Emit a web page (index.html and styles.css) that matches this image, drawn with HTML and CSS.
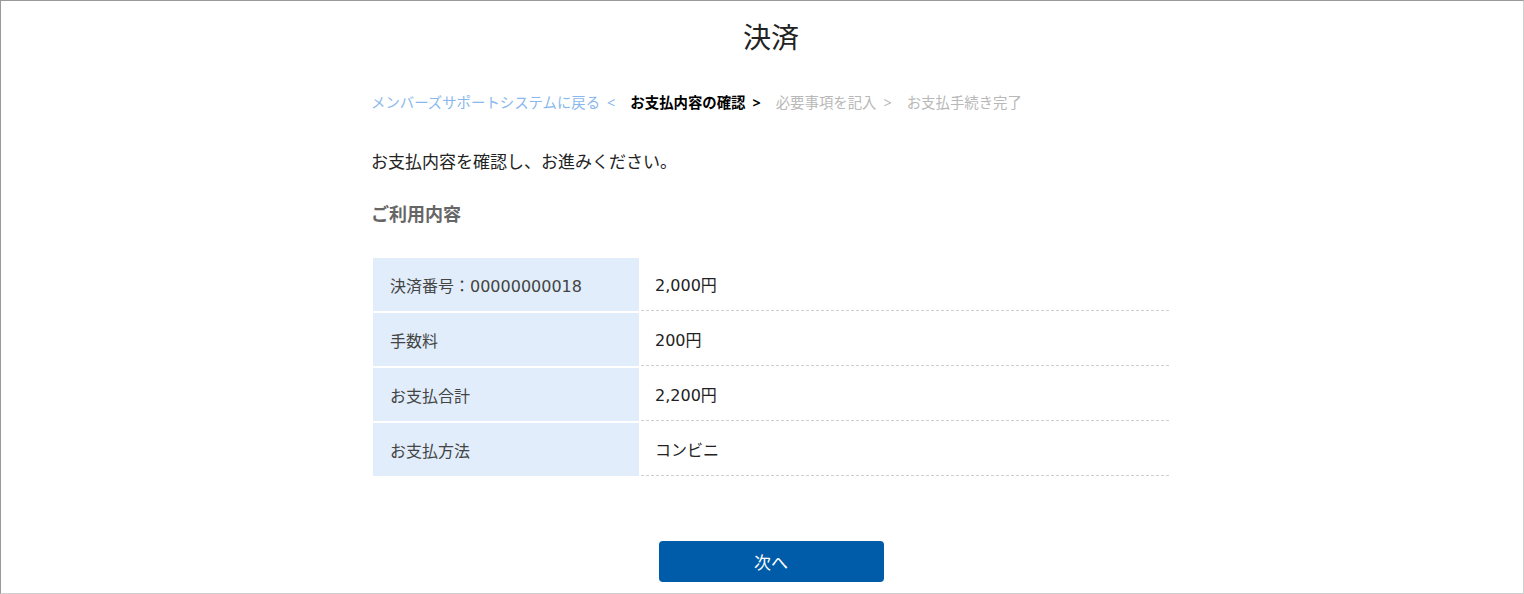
FILE: index.html
```html
<!DOCTYPE html>
<html lang="ja">
<head>
    <meta charset="UTF-8">
    <meta name="viewport" content="width=device-width, initial-scale=1.0">
    <title>決済</title>
    <link rel="stylesheet" href="styles.css">
</head>
<body>
    <div id="frame">
        <h1 class="pageTitle">決済</h1>
        <div id="container">
            <ol class="steps">
                <li class="stepBack"><a href="#">メンバーズサポートシステムに戻る</a><span class="sep">&lt;</span></li>
                <li class="stepCurrent">お支払内容の確認<span class="sep">&gt;</span></li>
                <li class="stepNext">必要事項を記入<span class="sep">&gt;</span></li>
                <li class="stepNext">お支払手続き完了</li>
            </ol>

            <p class="lead">お支払内容を確認し、お進みください。</p>

            <h2 class="sectionTitle">ご利用内容</h2>

            <table class="detailTable">
                <tr>
                    <th>決済番号：00000000018</th>
                    <td>2,000円</td>
                </tr>
                <tr>
                    <th>手数料</th>
                    <td>200円</td>
                </tr>
                <tr>
                    <th>お支払合計</th>
                    <td>2,200円</td>
                </tr>
                <tr>
                    <th>お支払方法</th>
                    <td>コンビニ</td>
                </tr>
            </table>

            <div class="actions">
                <button type="button" class="nextButton">次へ</button>
            </div>
        </div>
    </div>
</body>
</html>
```

FILE: styles.css
```css
html, body {
    margin: 0;
    padding: 0;
    height: 100%;
}
body {
    font-family: "DejaVu Sans", "Noto Sans CJK JP", sans-serif;
    color: #222;
    background-color: #fff;
}
#frame {
    box-sizing: border-box;
    height: 594px;
    overflow: hidden;
    border: 1px solid #cfcfcf;
    border-top-color: #9a9a9a;
    border-left-color: #9a9a9a;
    padding-left: 18px;
}
.pageTitle {
    margin: 19px 0 0;
    text-align: center;
    font-size: 28px;
    font-weight: normal;
    line-height: 38px;
    color: #222;
}
#container {
    width: 800px;
    margin: 0 auto;
}
.steps {
    display: flex;
    list-style: none;
    margin: 35px 0 0;
    padding: 0;
    font-size: 14.4px;
    line-height: 20px;
}
.steps li {
    margin-right: 15px;
}
.steps .sep {
    margin-left: 7px;
    font-family: "Noto Sans", sans-serif;
}
.stepBack,
.stepBack a {
    color: #8ab8ec; /* light blue link */
    text-decoration: none;
}
.stepCurrent {
    color: #000;
    font-weight: bold;
}
.stepNext {
    color: #b8b8b8;
}
.lead {
    margin: 37px 0 0;
    font-size: 17px;
    line-height: 24px;
}
.sectionTitle {
    margin: 29px 0 0;
    font-size: 18px;
    line-height: 24px;
    color: #666;
}
.detailTable {
    width: 800px;
    margin-top: 29px;
    border-collapse: separate;
    border-spacing: 2px;
    font-size: 16px;
}
.detailTable th {
    width: 249px;
    height: 53px;
    padding: 0 0 0 17px;
    text-align: left;
    font-weight: normal;
    color: #444;
    background-color: #e1edfa;
}
.detailTable td {
    height: 52px;
    padding: 0 0 0 14px;
    color: #222;
    border-bottom: 1px dashed #cfcfcf;
}
.actions {
    display: flex;
    justify-content: center;
    margin-top: 63px;
}
.nextButton {
    width: 225px;
    height: 41px;
    font-family: inherit;
    font-size: 17px;
    color: #fff;
    background-color: #005ca8;
    border: none;
    border-radius: 4px;
    cursor: pointer;
}
.nextButton:hover {
    background-color: #004d8e;
}
```
